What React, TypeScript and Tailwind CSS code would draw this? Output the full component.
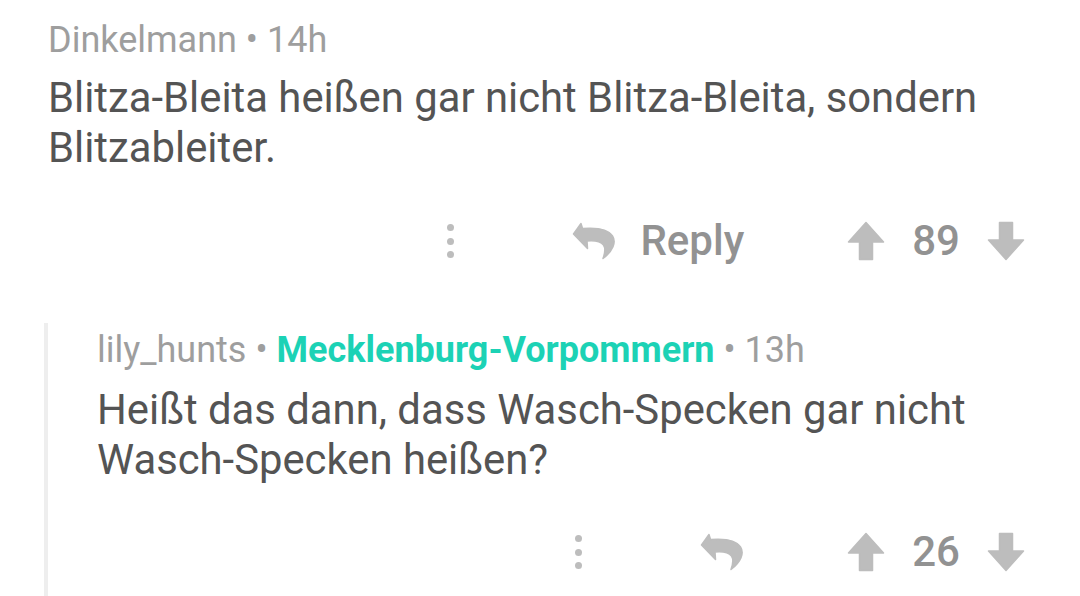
import React from "react";

const ICON = "#bdbdbd";

function Dots() {
  return (
    <div className="flex flex-col gap-[6.5px]">
      <span className="block w-[7px] h-[7px] rounded-full bg-[#bdbdbd]" />
      <span className="block w-[7px] h-[7px] rounded-full bg-[#bdbdbd]" />
      <span className="block w-[7px] h-[7px] rounded-full bg-[#bdbdbd]" />
    </div>
  );
}

function ReplyIcon() {
  return (
    <svg width="44" height="38" viewBox="0 0 44 38">
      <path
        d="M1.5 12 L9 1.5 L10.5 6.5 C22 5.5 35 6 40.5 14 C44.5 20 41 29 31 36.5 C33 31 33.5 26 31.5 23 C28 18.5 21 18.5 15 19 L15.5 26.5 Z"
        fill={ICON}
        stroke={ICON}
        strokeWidth="1.5"
        strokeLinejoin="round"
      />
    </svg>
  );
}

function VoteArrow({ down = false }: { down?: boolean }) {
  return (
    <svg
      width="38"
      height="40"
      viewBox="0 0 38 40"
      className={down ? "rotate-180" : ""}
    >
      <path
        d="M19 1.5 L36.5 21 L25.5 21 L25.5 38.5 L12.5 38.5 L12.5 21 L1.5 21 Z"
        fill={ICON}
        stroke={ICON}
        strokeWidth="1.5"
        strokeLinejoin="round"
      />
    </svg>
  );
}

function Actions({ score, label }: { score: number; label?: string }) {
  return (
    <div className="flex items-center justify-end h-[56px] pr-[55px]">
      <Dots />
      <div className="flex items-center ml-[118px]">
        <ReplyIcon />
        {label && (
          <span className="ml-[24px] text-[42px] leading-none font-medium text-[#929292]">
            {label}
          </span>
        )}
      </div>
      <div className="flex items-center ml-[103px]">
        <VoteArrow />
        <span className="mx-[27px] text-[42px] leading-none font-medium text-[#929292]">
          {score}
        </span>
        <VoteArrow down />
      </div>
    </div>
  );
}

export default function App() {
  return (
    <div
      className="w-[1080px] h-[596px] overflow-hidden bg-white"
      style={{ fontFamily: "Roboto, 'Liberation Sans', sans-serif" }}
    >
      {/* Parent comment */}
      <div className="pl-[48px] pt-[20px]">
        <div className="text-[36px] leading-[40px] text-[#9e9e9e]">
          Dinkelmann • 14h
        </div>
        <p className="mt-[13px] text-[41.8px] leading-[50px] text-[#545454]">
          Blitza-Bleita heißen gar nicht Blitza-Bleita, sondern
          <br />
          Blitzableiter.
        </p>
      </div>
      <div className="mt-[40px]">
        <Actions score={89} label="Reply" />
      </div>

      {/* Child comment */}
      <div className="mt-[54px] ml-[44px] border-l-4 border-[#eeeeee] pl-[49px] pt-[7px] pb-[40px]">
        <div className="text-[36px] leading-[40px] text-[#9e9e9e]">
          lily_hunts •{" "}
          <span className="font-bold text-[#1cd2b5]">Mecklenburg-Vorpommern</span>{" "}
          • 13h
        </div>
        <p className="mt-[15px] text-[41.8px] leading-[50px] text-[#545454]">
          Heißt das dann, dass Wasch-Specken gar nicht
          <br />
          Wasch-Specken heißen?
        </p>
        <div className="-ml-[97px] mt-[39px]">
          <Actions score={26} />
        </div>
      </div>
    </div>
  );
}
